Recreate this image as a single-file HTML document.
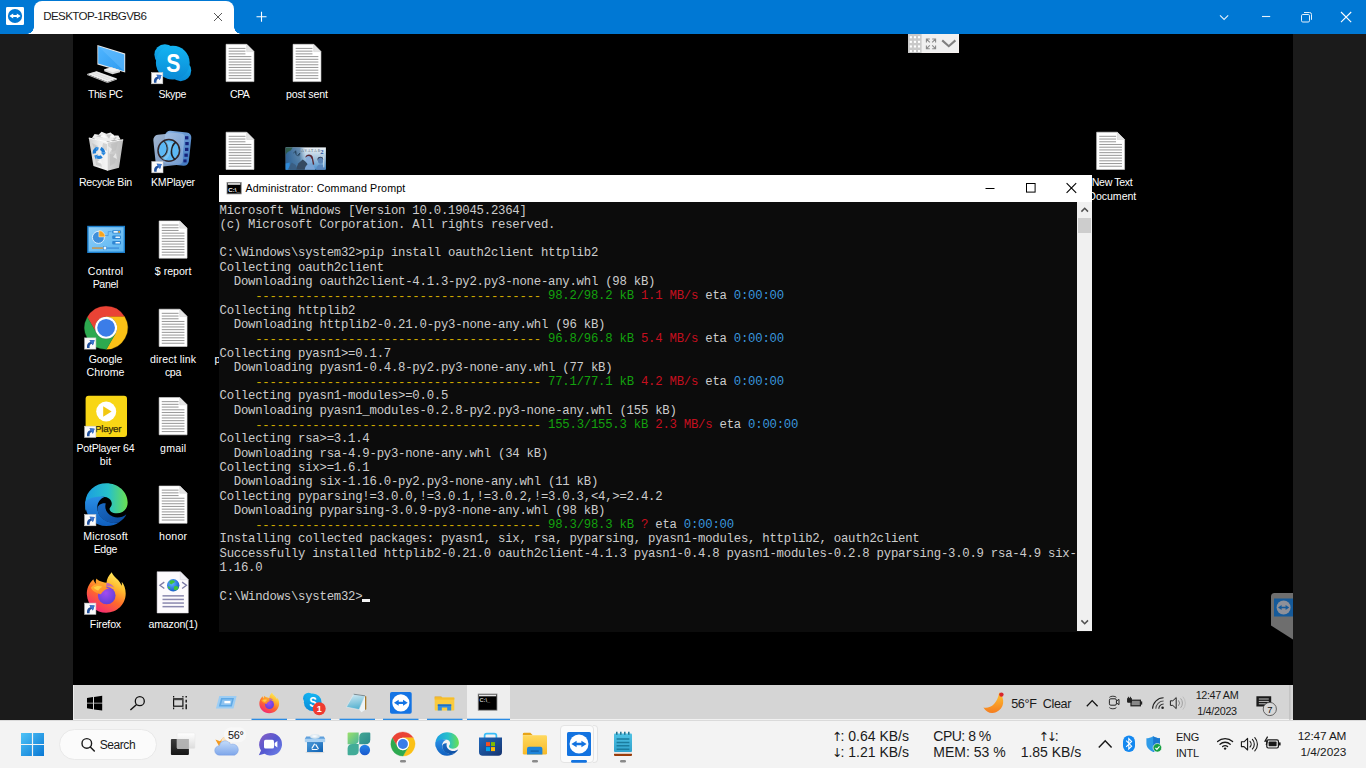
<!DOCTYPE html>
<html lang="en">
<head>
<meta charset="utf-8">
<title>DESKTOP-1RBGVB6 - TeamViewer</title>
<style>
*{box-sizing:border-box;margin:0;padding:0}
html,body{width:1366px;height:768px;overflow:hidden;background:#000;font-family:"Liberation Sans",sans-serif}
.abs{position:absolute}
#root{position:relative;width:1366px;height:768px;overflow:hidden;background:#000}
/* ---------- TeamViewer top bar ---------- */
#tvbar{left:0;top:0;width:1366px;height:34px;background:#0078d4}
#tvtab{left:34px;top:1px;width:200px;height:33px;background:#fff;border-radius:8px 8px 0 0}
#tvtab:before,#tvtab:after{content:"";position:absolute;bottom:0;width:7px;height:7px;background:radial-gradient(circle at 0 0,#0078d4 6.5px,#fff 7px)}
#tvtab:before{left:-7px}
#tvtab:after{right:-7px;background:radial-gradient(circle at 100% 0,#0078d4 6.5px,#fff 7px)}
#tvtitle{left:43.3px;top:8.1px;font-size:11.6px;line-height:15px;color:#1b1b1b;letter-spacing:-0.64px;white-space:nowrap}
/* ---------- side strips ---------- */
#lstrip{left:0;top:34px;width:73px;height:686px;background:#1b1b1b}
#rstrip{left:1293px;top:34px;width:73px;height:686px;background:#1b1b1b}
/* ---------- remote desktop ---------- */
#remote{left:73px;top:34px;width:1220px;height:686px;background:#000;overflow:hidden}
.dlabel{position:absolute;width:80px;text-align:center;color:#fff;font-size:10.6px;line-height:13.4px;letter-spacing:-0.35px;text-shadow:0 1px 1px #000;white-space:nowrap}
/* ---------- cmd window ---------- */
#cmd{left:219px;top:175px;width:873px;height:457px;background:#0c0c0c}
#cmdtitle{left:0;top:0;width:873px;height:27px;background:#fff}
#cmdname{left:26.5px;top:6.3px;font-size:10.7px;line-height:14px;color:#000;letter-spacing:0.15px;white-space:nowrap}
#cmdscroll{left:858px;top:27px;width:15px;height:429px;background:#f0f0f0}
#cmdthumb{left:1px;top:16px;width:13px;height:15px;background:#cdcdcd}
#term{left:0.5px;top:28.6px;width:858px;color:#cccccc;font-family:"Liberation Mono",monospace;font-size:12.3px;line-height:14.29px;letter-spacing:-0.237px;white-space:pre}
#term .y{color:#cfa800;position:relative;top:.6px}
#term .g{color:#13a10e}
#term .r{color:#c50f1f}
#term .b{color:#3a96dd}
/* ---------- remote taskbar ---------- */
#rtask{left:73px;top:685px;width:1220px;height:35px;background:#d5d5d5;border-left:1px solid #ececec;border-bottom:1px solid #f2f2f2}
/* ---------- local taskbar ---------- */
#ltask{left:0;top:720px;width:1366px;height:48px;background:#f3f3f3;border-top:1px solid #dadada}
.tt{position:absolute;white-space:nowrap;color:#1a1a1a}
</style>
</head>
<body>
<div id="root">

<!-- TOPBAR -->
<div id="tvbar" class="abs"></div>
<div id="tvtab" class="abs"></div>
<div id="tvtitle" class="abs">DESKTOP-1RBGVB6</div>
<svg class="abs" style="left:0;top:0" width="1366" height="34" viewBox="0 0 1366 34"><g transform="translate(6.00 7.00) scale(1.0000)"><rect x="0" y="0" width="18" height="18" rx="1.2" fill="#ffffff"/><circle cx="9" cy="9" r="7.100" fill="#0078d4"/><path d="M3.300 9L7.200 6.500V8.100H10.800V6.500L14.700 9 10.800 11.500V9.900H7.200V11.500z" fill="#ffffff"/></g><path d="M214 13l8 8M222 13l-8 8" stroke="#5a5a5a" stroke-width="1" fill="none"/><path d="M256.500 16.700h10M261.500 11.700v10" stroke="#ffffff" stroke-width="1.100" fill="none"/><path d="M1220 15.400l4.100 4.100 4.100-4.100" stroke="#e6f1fb" stroke-width="1.100" fill="none"/><path d="M1262 16.500h8.200" stroke="#e6f1fb" stroke-width="1.100" fill="none"/><rect x="1301.500" y="14.500" width="8" height="7.500" rx="1.300" stroke="#e6f1fb" stroke-width="1" fill="none"/><path d="M1304 12.500h5.500a2 2 0 0 1 2 2v5.300" stroke="#e6f1fb" stroke-width="1" fill="none"/><path d="M1341 12l10.200 10.200M1351.200 12l-10.200 10.200" stroke="#ffffff" stroke-width="1.100" fill="none"/></svg><div class="abs" style="left:908px;top:34px;width:51px;height:19px;background:#f0f0f0;border:1px solid #f7f2f0;border-top:0"></div><svg class="abs" style="left:908px;top:34px" width="51" height="19" viewBox="0 0 51 19"><rect x="0" y="0" width="13.600" height="19" fill="#c9c9c9"/><rect x="1.80" y="2.20" width="2.100" height="2.100" fill="#ffffff"/><rect x="5.90" y="2.20" width="2.100" height="2.100" fill="#ffffff"/><rect x="10.00" y="2.20" width="2.100" height="2.100" fill="#ffffff"/><rect x="1.80" y="6.80" width="2.100" height="2.100" fill="#ffffff"/><rect x="5.90" y="6.80" width="2.100" height="2.100" fill="#ffffff"/><rect x="10.00" y="6.80" width="2.100" height="2.100" fill="#ffffff"/><rect x="1.80" y="11.40" width="2.100" height="2.100" fill="#ffffff"/><rect x="5.90" y="11.40" width="2.100" height="2.100" fill="#ffffff"/><rect x="10.00" y="11.40" width="2.100" height="2.100" fill="#ffffff"/><rect x="1.80" y="16.00" width="2.100" height="2.100" fill="#ffffff"/><rect x="5.90" y="16.00" width="2.100" height="2.100" fill="#ffffff"/><rect x="10.00" y="16.00" width="2.100" height="2.100" fill="#ffffff"/><g stroke="#8a8a8a" stroke-width="1.100" fill="none"><path d="M18.400 8.400v-3.400h3.400M18.800 5.400l3 3M27.600 8.400v-3.400h-3.400M27.200 5.400l-3 3M18.400 11.400v3.400h3.400M18.800 14.400l3-3M27.600 11.400v3.400h-3.400M27.200 14.400l-3-3"/></g><path d="M34.200 6.400l6.600 5.800 6.600-5.800" stroke="#808080" stroke-width="2.100" fill="none"/></svg><svg class="abs" style="left:1270px;top:592px" width="24" height="50" viewBox="0 0 24 50"><path d="M23 1H4.500Q1 1 1 4.500V33.500L23 47.500z" fill="#6e6e6e"/><rect x="4" y="6.500" width="19" height="18" fill="#155a9a"/><circle cx="13.600" cy="15.500" r="7" fill="#8d9099"/><path d="M8 15.500L11.600 13v1.700h4V13L19.200 15.500 15.600 18v-1.700h-4V18z" fill="#155a9a"/></svg>

<div id="lstrip" class="abs"></div>
<div id="rstrip" class="abs"></div>

<!-- DESKTOP -->
<div id="desk" class="abs" style="left:0;top:0;width:1366px;height:768px">
<svg class="abs" style="left:0;top:0" width="1366" height="768" viewBox="0 0 1366 768"><g transform="translate(84.00 44.00)"><defs><linearGradient id="pcg" x1="0" y1="0" x2="1" y2="1"><stop offset="0" stop-color="#4fb4ff"/><stop offset="1" stop-color="#2f9cf0"/></linearGradient></defs><path d="M13.4 0.9L41.2 9.6V28.6L13.4 20.4z" fill="#e8e8e8"/><path d="M14.2 2.2L40.2 10.4V27.2L14.2 19.6z" fill="url(#pcg)"/><path d="M14.2 2.2L40.2 10.4V27.2z" fill="#6cc2ff" opacity=".45"/><path d="M20.2 25.2L27.6 23.4 36 26.2 36 28.2 28.6 30.2 20.2 27.2z" fill="#d9d9d9"/><path d="M20.2 25.2L27.6 23.4 36 26.2 28.6 28.2z" fill="#f2f2f2"/><path d="M3 30L12.6 27.2 33 34.6 23.4 38z" fill="#f0f0f0"/><path d="M3 30L23.4 38V39L3 31z" fill="#bdbdbd"/><path d="M23.4 38L33 34.6V35.6L23.4 39z" fill="#cfcfcf"/><path d="M6 29.8L13 27.8M8.6 30.8L15.6 28.8M11.2 31.8L18.2 29.8M13.8 32.8L20.8 30.8M16.4 33.8L23.4 31.8M19 34.8L26 32.8M21.6 35.8L28.6 33.8" stroke="#d2d2d2" stroke-width=".6"/></g><g><defs><linearGradient id="sk1" x1="0" y1="0" x2="0" y2="1"><stop offset="0" stop-color="#14b4f2"/><stop offset="1" stop-color="#0a8ad6"/></linearGradient></defs><circle cx="164.90" cy="54.80" r="10.53" fill="url(#sk1)"/><circle cx="180.70" cy="70.60" r="10.53" fill="url(#sk1)"/><circle cx="172.80" cy="62.70" r="16.92" fill="url(#sk1)"/><text transform="translate(173.36 71.84) scale(0.8 1)" x="0" y="0" text-anchor="middle" font-family="Liberation Sans,sans-serif" font-weight="bold" font-size="26.5" fill="#ffffff">S</text></g><g transform="translate(151.60 72.60) scale(0.933)"><rect x="0" y="0" width="12" height="12" fill="#fafafa" stroke="#cfcfcf" stroke-width="0.6"/><path d="M2.6 10.8C2 7 3.8 4.700 6.400 4.400L5.200 2.200 10.600 2.600 8.800 8 7.600 6.200C5.800 6.600 5 8.200 5.200 10.800z" fill="#1f4f9c"/><path d="M6.400 4.400L5.200 2.200 10.600 2.600 8.800 8z" fill="#3a74cc"/></g><g><path d="M226.05 44.30h20.60l7.30 7.30v30.00h-27.90z" fill="#ffffff" stroke="#d8d8d8" stroke-width="0.6"/><rect x="228.65" y="47.90" width="16.80" height="1.05" fill="#9c9c9c"/><rect x="228.65" y="50.62" width="16.80" height="1.05" fill="#9c9c9c"/><rect x="228.65" y="53.34" width="16.80" height="1.05" fill="#9c9c9c"/><rect x="228.65" y="56.06" width="22.70" height="1.05" fill="#9c9c9c"/><rect x="228.65" y="58.78" width="22.70" height="1.05" fill="#9c9c9c"/><rect x="228.65" y="61.50" width="22.70" height="1.05" fill="#9c9c9c"/><rect x="228.65" y="64.22" width="22.70" height="1.05" fill="#9c9c9c"/><rect x="228.65" y="66.94" width="22.70" height="1.05" fill="#9c9c9c"/><rect x="228.65" y="69.66" width="22.70" height="1.05" fill="#9c9c9c"/><rect x="228.65" y="72.38" width="22.70" height="1.05" fill="#9c9c9c"/><rect x="228.65" y="75.10" width="22.70" height="1.05" fill="#9c9c9c"/><rect x="228.65" y="77.82" width="22.70" height="1.05" fill="#9c9c9c"/><path d="M246.65 44.30v7.30h7.30z" fill="#e4e4e4" stroke="#cfcfcf" stroke-width="0.5"/></g><g><path d="M293.05 44.30h20.60l7.30 7.30v30.00h-27.90z" fill="#ffffff" stroke="#d8d8d8" stroke-width="0.6"/><rect x="295.65" y="47.90" width="16.80" height="1.05" fill="#9c9c9c"/><rect x="295.65" y="50.62" width="16.80" height="1.05" fill="#9c9c9c"/><rect x="295.65" y="53.34" width="16.80" height="1.05" fill="#9c9c9c"/><rect x="295.65" y="56.06" width="22.70" height="1.05" fill="#9c9c9c"/><rect x="295.65" y="58.78" width="22.70" height="1.05" fill="#9c9c9c"/><rect x="295.65" y="61.50" width="22.70" height="1.05" fill="#9c9c9c"/><rect x="295.65" y="64.22" width="22.70" height="1.05" fill="#9c9c9c"/><rect x="295.65" y="66.94" width="22.70" height="1.05" fill="#9c9c9c"/><rect x="295.65" y="69.66" width="22.70" height="1.05" fill="#9c9c9c"/><rect x="295.65" y="72.38" width="22.70" height="1.05" fill="#9c9c9c"/><rect x="295.65" y="75.10" width="22.70" height="1.05" fill="#9c9c9c"/><rect x="295.65" y="77.82" width="22.70" height="1.05" fill="#9c9c9c"/><path d="M313.65 44.30v7.30h7.30z" fill="#e4e4e4" stroke="#cfcfcf" stroke-width="0.5"/></g><g transform="translate(84.00 131.00)"><defs><linearGradient id="rbg" x1="0" y1="0" x2="1" y2="0"><stop offset="0" stop-color="#cfcfcf"/><stop offset=".3" stop-color="#ececec"/><stop offset=".52" stop-color="#f4f4f4"/><stop offset=".56" stop-color="#d4d4d4"/><stop offset="1" stop-color="#bdbdbd"/></linearGradient></defs><path d="M8 7L10.600 3 14.600 3.800 17.600 0.800 22.400 2.800 26.600 1.600 30 4.600 34.400 4.400 36.600 8.400 20 11z" fill="#ededed"/><path d="M12 5.600l4-2.200 3 3.400zM22 3.400l5 0-2 4.400zM29 5.400l4 1.200-3 3z" fill="#c9c9c9"/><path d="M16 6l4-3 3 4zM26 6l3-3 2 4z" fill="#fbfbfb"/><path d="M4.800 7L23.600 11 39.200 8.800 35 36.800 23.600 39.800 9.400 35z" fill="url(#rbg)"/><g opacity=".55"><path d="M8 12l6 3-3 6zM27 13l7-2-2 8-4 2zM26 23l7 1-2 8-5 3zM11 27l5 2 2 7-6-2zM19 12l4 1v7l-5-3z" fill="#bcbcbc"/><path d="M24 15l4 3-3 5zM29 26l3-4 1 6zM13 31l4-3 1 5z" fill="#ffffff"/></g><path d="M4.800 7L23.600 11 39.200 8.800" fill="none" stroke="#fdfdfd" stroke-width="1.100"/><path d="M23.600 11V39.800" stroke="#f6f6f6" stroke-width=".7" opacity=".8"/><path d="M16.62 17.53A4.6 4.6 0 0 1 19.50 21.64" fill="none" stroke="#1c7cd6" stroke-width="3.200"/><path d="M22.10 21.55L16.90 21.73L19.59 24.44z" fill="#2b8ae0"/><path d="M17.73 25.42A4.6 4.6 0 0 1 12.74 25.86" fill="none" stroke="#1c7cd6" stroke-width="3.200"/><path d="M11.52 28.16L13.96 23.57L10.27 24.55z" fill="#2b8ae0"/><path d="M10.34 22.44A4.6 4.6 0 0 1 12.46 17.90" fill="none" stroke="#1c7cd6" stroke-width="3.200"/><path d="M11.08 15.69L13.84 20.10L14.84 16.42z" fill="#2b8ae0"/></g><g transform="translate(152.40 130.80)"><defs><linearGradient id="kmg" x1="0" y1="0" x2="1" y2="1"><stop offset="0" stop-color="#b4cbe8"/><stop offset="1" stop-color="#7098cc"/></linearGradient><linearGradient id="kmb" x1="0" y1="0" x2="1" y2="1"><stop offset="0" stop-color="#86b0e0"/><stop offset="1" stop-color="#3f78c0"/></linearGradient></defs><rect x="11.400" y="0.800" width="26.400" height="33.400" rx="5" fill="url(#kmb)" transform="rotate(6 25 17)"/><rect x="13" y="2.400" width="18" height="30" rx="3.500" fill="#a9c6ea" opacity=".55" transform="rotate(6 25 17)"/><g fill="#14227a"><rect x="32.600" y="5.400" width="3.400" height="3.200"/><rect x="32.900" y="11.200" width="3.400" height="3.200"/><rect x="32.600" y="17" width="3.400" height="3.200"/><rect x="32" y="22.800" width="3.400" height="3.200"/><rect x="31" y="28.600" width="3.200" height="3"/></g><rect x="2" y="3" width="27.600" height="32" rx="5" fill="url(#kmg)" opacity=".9" transform="rotate(-6 16 19)"/><circle cx="16.400" cy="19.600" r="10.800" fill="#5cb8f4" stroke="#33262a" stroke-width="1.500"/><path d="M11.600 10.200C16.600 15 16.600 24.200 8.400 27" fill="none" stroke="#221c1e" stroke-width="1.700"/><path d="M23.400 11.400C17.400 16.200 17.800 25.200 22.800 28.800" fill="none" stroke="#221c1e" stroke-width="1.700"/><path d="M11.600 10.200C16.600 15 16.600 24.200 8.400 27L12 29.600C18 27 18.600 18 20.400 12.200z" fill="#9bd8fc" opacity=".45"/></g><g transform="translate(151.80 161.60) scale(0.933)"><rect x="0" y="0" width="12" height="12" fill="#fafafa" stroke="#cfcfcf" stroke-width="0.6"/><path d="M2.6 10.8C2 7 3.8 4.700 6.400 4.400L5.200 2.200 10.600 2.600 8.800 8 7.600 6.200C5.800 6.600 5 8.200 5.200 10.800z" fill="#1f4f9c"/><path d="M6.400 4.400L5.200 2.200 10.600 2.600 8.800 8z" fill="#3a74cc"/></g><g><path d="M226.05 132.20h20.60l7.30 7.30v30.00h-27.90z" fill="#ffffff" stroke="#d8d8d8" stroke-width="0.6"/><rect x="228.65" y="135.80" width="16.80" height="1.05" fill="#9c9c9c"/><rect x="228.65" y="138.52" width="16.80" height="1.05" fill="#9c9c9c"/><rect x="228.65" y="141.24" width="16.80" height="1.05" fill="#9c9c9c"/><rect x="228.65" y="143.96" width="22.70" height="1.05" fill="#9c9c9c"/><rect x="228.65" y="146.68" width="22.70" height="1.05" fill="#9c9c9c"/><rect x="228.65" y="149.40" width="22.70" height="1.05" fill="#9c9c9c"/><rect x="228.65" y="152.12" width="22.70" height="1.05" fill="#9c9c9c"/><rect x="228.65" y="154.84" width="22.70" height="1.05" fill="#9c9c9c"/><rect x="228.65" y="157.56" width="22.70" height="1.05" fill="#9c9c9c"/><rect x="228.65" y="160.28" width="22.70" height="1.05" fill="#9c9c9c"/><rect x="228.65" y="163.00" width="22.70" height="1.05" fill="#9c9c9c"/><rect x="228.65" y="165.72" width="22.70" height="1.05" fill="#9c9c9c"/><path d="M246.65 132.20v7.30h7.30z" fill="#e4e4e4" stroke="#cfcfcf" stroke-width="0.5"/></g><g transform="translate(285.70 147.40)"><defs><linearGradient id="avg" x1="0" y1="0" x2="0" y2="1"><stop offset="0" stop-color="#eef4f8"/><stop offset=".45" stop-color="#a9c6de"/><stop offset="1" stop-color="#4a8fcc"/></linearGradient><linearGradient id="avl" x1="0" y1="0" x2="1" y2="0"><stop offset="0" stop-color="#2d6296"/><stop offset=".7" stop-color="#3f6d98" stop-opacity=".75"/><stop offset="1" stop-color="#6f9cc4" stop-opacity="0"/></linearGradient></defs><rect x="0" y="0" width="40.2" height="22.3" fill="url(#avg)"/><rect x="0" y="0" width="20" height="22.3" fill="url(#avl)"/><path d="M0 0h7l-2 3-3 1.500L0 7z" fill="#2f5a3a" opacity=".8"/><path d="M0 16l4-1 0 7.300H0z" fill="#2f8ad8"/><path d="M10 22.300L12.500 16 17 12 21 15 24 22.300z" fill="#364a62"/><path d="M2 22.300L6 15 10 17.500 12 22.300z" fill="#3a5a7c" opacity=".8"/><path d="M7.700 5.600l2.600-2.200-.6 2.400 1.800-.2M9.600 6.400l2 1.800 2.600-2.400-1.400 3" stroke="#1f3a52" stroke-width=".8" fill="none"/><path d="M19.600 10.200c.4-3.600 5.800-4.200 7.400-.8l1.600 7.600-1.400.4-1-5.600c-1.600-2.400-4.800-2.600-6.600-1.600z" fill="#5a2632"/><ellipse cx="22.800" cy="12.400" rx="2.900" ry="3.800" fill="#86addb"/><path d="M19 22.300c.6-4.600 3-5.800 5-5.800s4.600 1.400 5.400 5.800z" fill="#7aa4d6"/><path d="M31.800 11.600c.6-3 5.200-3 5.800.2l-.6 1.600h-4.800z" fill="#26283e"/><ellipse cx="34.800" cy="13.200" rx="2.600" ry="3.200" fill="#5c84b6"/><path d="M30.400 22.300c.6-4 2.600-5.200 4.400-5.200s4 1.200 4.600 5.200z" fill="#5a86bc"/><path d="M38 9v11" stroke="#e8f0f6" stroke-width="1" opacity=".7"/><text x="25.500" y="4.700" text-anchor="middle" font-family="Liberation Serif,serif" font-size="3.600" fill="#4a5a6a" letter-spacing="1.100">AVATAR</text><text x="36.200" y="6.400" text-anchor="middle" font-family="Liberation Serif,serif" font-weight="bold" font-size="6.600" fill="#1f4f9c">2</text></g><g transform="translate(84.00 219.00)"><defs><linearGradient id="cpg" x1="0" y1="0" x2="1" y2="1"><stop offset="0" stop-color="#8fd0fa"/><stop offset="1" stop-color="#5ab4f0"/></linearGradient></defs><rect x="3.2" y="6.8" width="37.8" height="27.2" fill="#1d7fcc"/><rect x="4.6" y="8.2" width="35" height="24.4" fill="url(#cpg)"/><circle cx="14.4" cy="18.4" r="6" fill="#3f8fda" stroke="#e8f4ff" stroke-width=".9"/><path d="M14.9 17.9V11.6A6.3 6.3 0 0 1 21.2 17.9z" fill="#f7a51e" stroke="#fff" stroke-width=".5"/><path d="M21 16.6h3.2v-4h3.4" fill="none" stroke="#3f8fda" stroke-width=".7"/><g fill="#2f86d2"><rect x="28.2" y="11.2" width="8.8" height="3.4" rx="1"/><rect x="28.2" y="16.6" width="8.8" height="3.4" rx="1"/><rect x="28.2" y="22" width="8.8" height="3.4" rx="1"/></g><g fill="#e9f5ff"><rect x="29.4" y="12.1" width="4.6" height="1.6" rx=".6"/><rect x="31.4" y="17.5" width="4.6" height="1.6" rx=".6"/><rect x="31.4" y="22.9" width="4.6" height="1.6" rx=".6"/></g><rect x="34.4" y="12.1" width="1.6" height="1.6" fill="#f7a51e"/><rect x="8" y="28.4" width="27" height="1.4" fill="#3f8fda"/><rect x="8" y="28.4" width="11" height="1.4" fill="#d9a04a"/><rect x="19.4" y="27.4" width="3" height="3.4" fill="#eaf6ff" stroke="#2f86d2" stroke-width=".5"/></g><g><path d="M159.15 220.90h20.60l7.30 7.30v30.00h-27.90z" fill="#ffffff" stroke="#d8d8d8" stroke-width="0.6"/><rect x="161.75" y="224.50" width="16.80" height="1.05" fill="#9c9c9c"/><rect x="161.75" y="227.22" width="16.80" height="1.05" fill="#9c9c9c"/><rect x="161.75" y="229.94" width="16.80" height="1.05" fill="#9c9c9c"/><rect x="161.75" y="232.66" width="22.70" height="1.05" fill="#9c9c9c"/><rect x="161.75" y="235.38" width="22.70" height="1.05" fill="#9c9c9c"/><rect x="161.75" y="238.10" width="22.70" height="1.05" fill="#9c9c9c"/><rect x="161.75" y="240.82" width="22.70" height="1.05" fill="#9c9c9c"/><rect x="161.75" y="243.54" width="22.70" height="1.05" fill="#9c9c9c"/><rect x="161.75" y="246.26" width="22.70" height="1.05" fill="#9c9c9c"/><rect x="161.75" y="248.98" width="22.70" height="1.05" fill="#9c9c9c"/><rect x="161.75" y="251.70" width="22.70" height="1.05" fill="#9c9c9c"/><rect x="161.75" y="254.42" width="22.70" height="1.05" fill="#9c9c9c"/><path d="M179.75 220.90v7.30h7.30z" fill="#e4e4e4" stroke="#cfcfcf" stroke-width="0.5"/></g><g><path d="M96.57 333.30L87.33 317.31A21.50 21.50 0 0 1 124.57 316.79L106.10 316.79A11.01 11.01 0 0 0 96.57 333.30z" fill="#ea4335" stroke="#ea4335" stroke-width=".3"/><path d="M106.10 316.79L124.57 316.79A21.50 21.50 0 0 1 106.40 349.30L115.63 333.30A11.01 11.01 0 0 0 106.10 316.79z" fill="#fbc116" stroke="#fbc116" stroke-width=".3"/><path d="M115.63 333.30L106.40 349.30A21.50 21.50 0 0 1 87.33 317.31L96.57 333.30A11.01 11.01 0 0 0 115.63 333.30z" fill="#2da94f" stroke="#2da94f" stroke-width=".3"/><circle cx="106.10" cy="327.80" r="11.01" fill="#ffffff"/><circle cx="106.10" cy="327.80" r="8.90" fill="#3b7de8"/></g><g transform="translate(84.70 337.90) scale(0.933)"><rect x="0" y="0" width="12" height="12" fill="#fafafa" stroke="#cfcfcf" stroke-width="0.6"/><path d="M2.6 10.8C2 7 3.8 4.700 6.400 4.400L5.200 2.200 10.600 2.600 8.800 8 7.600 6.200C5.800 6.600 5 8.200 5.200 10.800z" fill="#1f4f9c"/><path d="M6.400 4.400L5.200 2.200 10.600 2.600 8.800 8z" fill="#3a74cc"/></g><g><path d="M159.15 309.20h20.60l7.30 7.30v30.00h-27.90z" fill="#ffffff" stroke="#d8d8d8" stroke-width="0.6"/><rect x="161.75" y="312.80" width="16.80" height="1.05" fill="#9c9c9c"/><rect x="161.75" y="315.52" width="16.80" height="1.05" fill="#9c9c9c"/><rect x="161.75" y="318.24" width="16.80" height="1.05" fill="#9c9c9c"/><rect x="161.75" y="320.96" width="22.70" height="1.05" fill="#9c9c9c"/><rect x="161.75" y="323.68" width="22.70" height="1.05" fill="#9c9c9c"/><rect x="161.75" y="326.40" width="22.70" height="1.05" fill="#9c9c9c"/><rect x="161.75" y="329.12" width="22.70" height="1.05" fill="#9c9c9c"/><rect x="161.75" y="331.84" width="22.70" height="1.05" fill="#9c9c9c"/><rect x="161.75" y="334.56" width="22.70" height="1.05" fill="#9c9c9c"/><rect x="161.75" y="337.28" width="22.70" height="1.05" fill="#9c9c9c"/><rect x="161.75" y="340.00" width="22.70" height="1.05" fill="#9c9c9c"/><rect x="161.75" y="342.72" width="22.70" height="1.05" fill="#9c9c9c"/><path d="M179.75 309.20v7.30h7.30z" fill="#e4e4e4" stroke="#cfcfcf" stroke-width="0.5"/></g><g transform="translate(84.00 394.10)"><rect x="1.6" y="1.7" width="41.4" height="41.3" rx="3" fill="#f8d615"/><circle cx="22.2" cy="17.4" r="10" fill="#ffffff"/><path d="M19.2 12.2L27.6 17.4 19.2 22.6z" fill="#f2c811"/><text x="24.2" y="37.9" text-anchor="middle" font-family="Liberation Sans,sans-serif" font-size="9.700" fill="#332b08" stroke="#332b08" stroke-width=".25" letter-spacing="-0.2">Player</text></g><g transform="translate(84.70 426.20) scale(0.933)"><rect x="0" y="0" width="12" height="12" fill="#fafafa" stroke="#cfcfcf" stroke-width="0.6"/><path d="M2.6 10.8C2 7 3.8 4.700 6.400 4.400L5.200 2.200 10.600 2.600 8.800 8 7.600 6.200C5.800 6.600 5 8.200 5.200 10.800z" fill="#1f4f9c"/><path d="M6.400 4.400L5.200 2.200 10.600 2.600 8.800 8z" fill="#3a74cc"/></g><g><path d="M159.15 397.50h20.60l7.30 7.30v30.00h-27.90z" fill="#ffffff" stroke="#d8d8d8" stroke-width="0.6"/><rect x="161.75" y="401.10" width="16.80" height="1.05" fill="#9c9c9c"/><rect x="161.75" y="403.82" width="16.80" height="1.05" fill="#9c9c9c"/><rect x="161.75" y="406.54" width="16.80" height="1.05" fill="#9c9c9c"/><rect x="161.75" y="409.26" width="22.70" height="1.05" fill="#9c9c9c"/><rect x="161.75" y="411.98" width="22.70" height="1.05" fill="#9c9c9c"/><rect x="161.75" y="414.70" width="22.70" height="1.05" fill="#9c9c9c"/><rect x="161.75" y="417.42" width="22.70" height="1.05" fill="#9c9c9c"/><rect x="161.75" y="420.14" width="22.70" height="1.05" fill="#9c9c9c"/><rect x="161.75" y="422.86" width="22.70" height="1.05" fill="#9c9c9c"/><rect x="161.75" y="425.58" width="22.70" height="1.05" fill="#9c9c9c"/><rect x="161.75" y="428.30" width="22.70" height="1.05" fill="#9c9c9c"/><rect x="161.75" y="431.02" width="22.70" height="1.05" fill="#9c9c9c"/><path d="M179.75 397.50v7.30h7.30z" fill="#e4e4e4" stroke="#cfcfcf" stroke-width="0.5"/></g><g transform="translate(84.40 482.80) scale(0.9125)"><defs><linearGradient id="e1a" x1="0" y1="0" x2="1" y2="0"><stop offset="0" stop-color="#1b9de2"/><stop offset=".55" stop-color="#27c1c9"/><stop offset="1" stop-color="#6be04f"/></linearGradient><linearGradient id="e1b" x1="0" y1="0" x2="0" y2="1"><stop offset="0" stop-color="#2a8fe6"/><stop offset="1" stop-color="#0f5fbf"/></linearGradient><linearGradient id="e1c" x1="0" y1="0" x2="1" y2="1"><stop offset="0" stop-color="#1a6bc4"/><stop offset="1" stop-color="#0b4a9e"/></linearGradient></defs><path d="M1 21C2 9 12 0.6 24 0.6C37 0.6 47.4 10 47.4 21.6C47.4 29 42 33.4 35.6 33.4C30 33.4 27.4 30.6 27.6 28.4C27.8 26.6 30 26 30 22.6C30 18.6 26 15.2 20.6 15.2C11.4 15.2 4 22 1 31z" fill="url(#e1a)"/><path d="M1 21C0 34 9 47.4 24 47.4C30 47.4 35 45.6 38.4 43C29 45.6 16.6 40.6 14.4 30C13 23 17 17.2 22.6 15.4C10 13.6 2 19 1 21z" fill="url(#e1b)"/><path d="M14.4 30C16 40.6 28 46.4 38.4 43C42 40.6 44.6 37.6 46 34.4C42 38 36 39 31 37C25 34.6 21.6 29 23.4 22.6C18 22 13.6 25 14.4 30z" fill="url(#e1c)"/></g><g transform="translate(84.70 514.60) scale(0.933)"><rect x="0" y="0" width="12" height="12" fill="#fafafa" stroke="#cfcfcf" stroke-width="0.6"/><path d="M2.6 10.8C2 7 3.8 4.700 6.400 4.400L5.200 2.200 10.600 2.600 8.800 8 7.600 6.200C5.800 6.600 5 8.200 5.200 10.800z" fill="#1f4f9c"/><path d="M6.400 4.400L5.200 2.200 10.600 2.600 8.800 8z" fill="#3a74cc"/></g><g><path d="M159.15 486.00h20.60l7.30 7.30v30.00h-27.90z" fill="#ffffff" stroke="#d8d8d8" stroke-width="0.6"/><rect x="161.75" y="489.60" width="16.80" height="1.05" fill="#9c9c9c"/><rect x="161.75" y="492.32" width="16.80" height="1.05" fill="#9c9c9c"/><rect x="161.75" y="495.04" width="16.80" height="1.05" fill="#9c9c9c"/><rect x="161.75" y="497.76" width="22.70" height="1.05" fill="#9c9c9c"/><rect x="161.75" y="500.48" width="22.70" height="1.05" fill="#9c9c9c"/><rect x="161.75" y="503.20" width="22.70" height="1.05" fill="#9c9c9c"/><rect x="161.75" y="505.92" width="22.70" height="1.05" fill="#9c9c9c"/><rect x="161.75" y="508.64" width="22.70" height="1.05" fill="#9c9c9c"/><rect x="161.75" y="511.36" width="22.70" height="1.05" fill="#9c9c9c"/><rect x="161.75" y="514.08" width="22.70" height="1.05" fill="#9c9c9c"/><rect x="161.75" y="516.80" width="22.70" height="1.05" fill="#9c9c9c"/><rect x="161.75" y="519.52" width="22.70" height="1.05" fill="#9c9c9c"/><path d="M179.75 486.00v7.30h7.30z" fill="#e4e4e4" stroke="#cfcfcf" stroke-width="0.5"/></g><g transform="translate(86.20 573.00) scale(0.8333)"><defs><linearGradient id="f1a" x1=".8" y1="0" x2=".25" y2="1"><stop offset="0" stop-color="#fff36b"/><stop offset=".3" stop-color="#ffbd2f"/><stop offset=".6" stop-color="#ff6a2b"/><stop offset="1" stop-color="#f3237a"/></linearGradient><radialGradient id="f1b" cx=".45" cy=".35" r=".7"><stop offset="0" stop-color="#a24cf0"/><stop offset="1" stop-color="#5a3fd6"/></radialGradient><linearGradient id="f1c" x1="0" y1="0" x2="1" y2="1"><stop offset="0" stop-color="#ffb52e"/><stop offset="1" stop-color="#ff7a2a"/></linearGradient></defs><path d="M30.6 -1C27 3 24.6 7 24.4 11.6C18 11 13.6 8.6 12.4 6.6C11 9 11.4 11.6 12 13C10.4 12 9 9.6 8.6 7.6C3 13 0.4 19.6 0.8 26C1.6 38.6 11.6 47.6 24 47.6C37 47.6 47.4 37.6 47.4 24.6C47.4 18.6 45.4 13.6 42.6 10.4C43 12.6 42.8 14 42.4 15.2C40.6 9.6 35.4 6 33.4 3.6C32 2 31 0.4 30.6 -1z" fill="url(#f1a)"/><circle cx="24.6" cy="27" r="10.6" fill="url(#f1b)"/><path d="M5.600 17.600C9 13 15 12.600 19.600 14.600C22.600 15.800 24.600 18 27.600 18.400C23.600 19.400 20 21.600 17.600 25.600C14 24.600 8 22.600 5.600 17.600z" fill="url(#f1c)"/><path d="M9 17.400C12 15 16.600 15 19.600 16.600C17 17.600 15.600 19.600 14.600 21C12.600 20.600 10.400 19.400 9 17.400z" fill="#ffd84a" opacity=".8"/><path d="M24.4 11.6C28 12 32 14 33.6 17.6C30 15.6 26.6 15.6 24 16.6z" fill="#a24cf0" opacity=".7"/></g><g transform="translate(84.70 603.10) scale(0.933)"><rect x="0" y="0" width="12" height="12" fill="#fafafa" stroke="#cfcfcf" stroke-width="0.6"/><path d="M2.6 10.8C2 7 3.8 4.700 6.400 4.400L5.200 2.200 10.600 2.600 8.800 8 7.600 6.200C5.800 6.600 5 8.200 5.200 10.800z" fill="#1f4f9c"/><path d="M6.400 4.400L5.200 2.200 10.600 2.600 8.800 8z" fill="#3a74cc"/></g><g transform="translate(157.10 571.70)"><path d="M0 0h23.2l8 8v33.3h-31.2z" fill="#fdfbfd" stroke="#d9d6de" stroke-width=".5"/><path d="M23.2 0v8h8z" fill="#ececf2" stroke="#cfcfd6" stroke-width=".5"/><defs><radialGradient id="glb" cx=".4" cy=".35" r=".7"><stop offset="0" stop-color="#5fb6ff"/><stop offset="1" stop-color="#1156c8"/></radialGradient></defs><circle cx="16.1" cy="13.6" r="6.2" fill="url(#glb)"/><path d="M12.4 9.6c2-1.6 4.4-1 5.4.2-.4 1.600-2.400 1.400-3 2.800-1.400.4-2.600-1-2.400-3zM17.600 14.400c1.800-.6 3.600.2 4 1.600-.8 1.800-2.600 2.800-4.200 2.600-1-1.400-.8-3.200.2-4.200zM11 14.600c1.200.2 2.200 1.200 2.400 2.600-.8.400-1.800-.2-2.600-1.400z" fill="#3fc43a"/><path d="M7.200 10.400L2.800 13.600 7.200 16.800M25 10.400L29.400 13.600 25 16.800" fill="none" stroke="#7d7ba6" stroke-width="1.300"/><g fill="#8a88ae"><rect x="5.400" y="23.400" width="21.400" height="1.500"/><rect x="5.400" y="27" width="21.400" height="1.500"/><rect x="5.400" y="30.600" width="21.400" height="1.500"/><rect x="5.400" y="34.200" width="21.400" height="1.500"/></g></g><g><path d="M1096.65 132.20h20.60l7.30 7.30v30.00h-27.90z" fill="#ffffff" stroke="#d8d8d8" stroke-width="0.6"/><rect x="1099.25" y="135.80" width="16.80" height="1.05" fill="#9c9c9c"/><rect x="1099.25" y="138.52" width="16.80" height="1.05" fill="#9c9c9c"/><rect x="1099.25" y="141.24" width="16.80" height="1.05" fill="#9c9c9c"/><rect x="1099.25" y="143.96" width="22.70" height="1.05" fill="#9c9c9c"/><rect x="1099.25" y="146.68" width="22.70" height="1.05" fill="#9c9c9c"/><rect x="1099.25" y="149.40" width="22.70" height="1.05" fill="#9c9c9c"/><rect x="1099.25" y="152.12" width="22.70" height="1.05" fill="#9c9c9c"/><rect x="1099.25" y="154.84" width="22.70" height="1.05" fill="#9c9c9c"/><rect x="1099.25" y="157.56" width="22.70" height="1.05" fill="#9c9c9c"/><rect x="1099.25" y="160.28" width="22.70" height="1.05" fill="#9c9c9c"/><rect x="1099.25" y="163.00" width="22.70" height="1.05" fill="#9c9c9c"/><rect x="1099.25" y="165.72" width="22.70" height="1.05" fill="#9c9c9c"/><path d="M1117.25 132.20v7.30h7.30z" fill="#e4e4e4" stroke="#cfcfcf" stroke-width="0.5"/></g></svg><div class="dlabel" style="left:65.27px;top:88.0px;letter-spacing:-0.46px">This PC</div><div class="dlabel" style="left:132.32px;top:88.0px;letter-spacing:-0.35px">Skype</div><div class="dlabel" style="left:199.71px;top:88.0px;letter-spacing:-0.58px">CPA</div><div class="dlabel" style="left:266.94px;top:88.0px;letter-spacing:-0.13px">post sent</div><div class="dlabel" style="left:65.36px;top:176.4px;letter-spacing:-0.27px">Recycle Bin</div><div class="dlabel" style="left:132.97px;top:176.4px;letter-spacing:-0.26px">KMPlayer</div><div class="dlabel" style="left:65.59px;top:264.8px;letter-spacing:0.18px">Control</div><div class="dlabel" style="left:65.33px;top:277.9px;letter-spacing:-0.35px">Panel</div><div class="dlabel" style="left:133.10px;top:264.8px;letter-spacing:0.00px">$ report</div><div class="dlabel" style="left:65.45px;top:353.2px;letter-spacing:-0.10px">Google</div><div class="dlabel" style="left:65.53px;top:366.3px;letter-spacing:0.07px">Chrome</div><div class="dlabel" style="left:133.16px;top:353.2px;letter-spacing:0.12px">direct link</div><div class="dlabel" style="left:132.92px;top:366.3px;letter-spacing:-0.35px">cpa</div><div class="dlabel" style="left:214.500px;top:353.2px;width:auto;text-align:left">p</div><div class="dlabel" style="left:65.39px;top:441.6px;letter-spacing:-0.23px">PotPlayer 64</div><div class="dlabel" style="left:65.58px;top:454.7px;letter-spacing:0.15px">bit</div><div class="dlabel" style="left:133.19px;top:441.6px;letter-spacing:0.19px">gmail</div><div class="dlabel" style="left:65.60px;top:530.0px;letter-spacing:0.20px">Microsoft</div><div class="dlabel" style="left:65.33px;top:543.1px;letter-spacing:-0.35px">Edge</div><div class="dlabel" style="left:133.21px;top:530.0px;letter-spacing:0.22px">honor</div><div class="dlabel" style="left:65.41px;top:618.4px;letter-spacing:-0.18px">Firefox</div><div class="dlabel" style="left:133.01px;top:618.4px;letter-spacing:-0.18px">amazon(1)</div><div class="dlabel" style="left:1072.12px;top:176.4px;letter-spacing:-0.35px">New Text</div><div class="dlabel" style="left:1072.28px;top:189.5px;letter-spacing:-0.04px">Document</div>
</div>

<!-- CMD -->
<div id="cmd" class="abs">
<div id="cmdtitle" class="abs"></div>
<div id="cmdname" class="abs">Administrator: Command Prompt</div>
<svg class="abs" style="left:0;top:0;z-index:3" width="873" height="457" viewBox="0 0 873 457"><g transform="translate(8.00 7.50)"><rect x="0" y="0" width="14.2" height="11.4" fill="#000000" stroke="#8c8c8c" stroke-width=".8"/><rect x=".8" y=".6" width="12.60" height="1.700" fill="#e6e6e6"/><text x="1.300" y="9.20" font-family="Liberation Sans,sans-serif" font-weight="bold" font-size="6.2" fill="#ffffff">C:\_</text></g><path d="M766.500 13.500h9" stroke="#000" stroke-width="1" fill="none"/><rect x="807.500" y="8.500" width="8.600" height="8.600" stroke="#000" stroke-width="1" fill="none"/><path d="M847.600 8.200l9.600 9.600M857.200 8.200l-9.600 9.600" stroke="#000" stroke-width="1.100" fill="none"/><path d="M862.400 36.600l3.300-3.300 3.300 3.300" stroke="#505050" stroke-width="1.500" fill="none"/><path d="M862.400 445.400l3.300 3.300 3.300-3.300" stroke="#505050" stroke-width="1.500" fill="none"/></svg>
<div id="cmdscroll" class="abs"><div id="cmdthumb" class="abs"></div></div>
<div id="term" class="abs">Microsoft Windows [Version 10.0.19045.2364]
(c) Microsoft Corporation. All rights reserved.

C:\Windows\system32&gt;pip install oauth2client httplib2
Collecting oauth2client
  Downloading oauth2client-4.1.3-py2.py3-none-any.whl (98 kB)
     <span class="y">----------------------------------------</span> <span class="g">98.2/98.2 kB</span> <span class="r">1.1 MB/s</span> eta <span class="b">0:00:00</span>
Collecting httplib2
  Downloading httplib2-0.21.0-py3-none-any.whl (96 kB)
     <span class="y">----------------------------------------</span> <span class="g">96.8/96.8 kB</span> <span class="r">5.4 MB/s</span> eta <span class="b">0:00:00</span>
Collecting pyasn1&gt;=0.1.7
  Downloading pyasn1-0.4.8-py2.py3-none-any.whl (77 kB)
     <span class="y">----------------------------------------</span> <span class="g">77.1/77.1 kB</span> <span class="r">4.2 MB/s</span> eta <span class="b">0:00:00</span>
Collecting pyasn1-modules&gt;=0.0.5
  Downloading pyasn1_modules-0.2.8-py2.py3-none-any.whl (155 kB)
     <span class="y">----------------------------------------</span> <span class="g">155.3/155.3 kB</span> <span class="r">2.3 MB/s</span> eta <span class="b">0:00:00</span>
Collecting rsa&gt;=3.1.4
  Downloading rsa-4.9-py3-none-any.whl (34 kB)
Collecting six&gt;=1.6.1
  Downloading six-1.16.0-py2.py3-none-any.whl (11 kB)
Collecting pyparsing!=3.0.0,!=3.0.1,!=3.0.2,!=3.0.3,&lt;4,&gt;=2.4.2
  Downloading pyparsing-3.0.9-py3-none-any.whl (98 kB)
     <span class="y">----------------------------------------</span> <span class="g">98.3/98.3 kB</span> <span class="r">?</span> eta <span class="b">0:00:00</span>
Installing collected packages: pyasn1, six, rsa, pyparsing, pyasn1-modules, httplib2, oauth2client
Successfully installed httplib2-0.21.0 oauth2client-4.1.3 pyasn1-0.4.8 pyasn1-modules-0.2.8 pyparsing-3.0.9 rsa-4.9 six-
1.16.0

C:\Windows\system32&gt;<span style="display:inline-block;width:8px;height:3.7px;background:#f4f4f4;vertical-align:-2.6px"></span></div>
</div>

<!-- RTASK -->
<div id="rtask" class="abs"></div>
<div class="abs" style="left:467px;top:685px;width:43px;height:35px;background:#eeeeee"></div><svg class="abs" style="left:0;top:680px" width="1366" height="45" viewBox="0 680 1366 45"><path d="M87 698.100L93 697.100V702.700H87zM94 696.900L102.200 695.700V702.700H94zM87 703.600H93V709.200L87 708.200zM94 703.600H102.200V710.600L94 709.400z" fill="#000"/><circle cx="139.800" cy="701.200" r="4.500" fill="none" stroke="#111" stroke-width="1.300"/><path d="M136.600 704.400L130.400 709.900" stroke="#111" stroke-width="1.400"/><rect x="173.600" y="698.800" width="9.300" height="7.400" fill="none" stroke="#111" stroke-width="1.200"/><rect x="173.600" y="698.400" width="9.300" height="1.800" fill="#444"/><path d="M173.600 696v1.600M182.900 696v1.600M173.600 707.400v1.800M182.900 707.400v1.800" stroke="#111" stroke-width="1.200"/><path d="M186.200 696v1.600M186.200 699.800v2.600M186.200 704.200v5" stroke="#111" stroke-width="1.400"/><path d="M219.300 696L236.600 696 233.500 708.600 215.900 708.600z" fill="#9ccdf4"/><path d="M221.100 698L234 698 231.800 706.600 218.800 706.600z" fill="#5fa9e6"/><path d="M222.400 699.600L232 699.600 230.600 705 221 705z" fill="#8ec3f0"/><rect x="224.400" y="701" width="6" height="2.300" fill="#ffffff"/><g transform="translate(259.00 693.00) scale(0.4250)"><defs><linearGradient id="f2a" x1=".8" y1="0" x2=".25" y2="1"><stop offset="0" stop-color="#fff36b"/><stop offset=".3" stop-color="#ffbd2f"/><stop offset=".6" stop-color="#ff6a2b"/><stop offset="1" stop-color="#f3237a"/></linearGradient><radialGradient id="f2b" cx=".45" cy=".35" r=".7"><stop offset="0" stop-color="#a24cf0"/><stop offset="1" stop-color="#5a3fd6"/></radialGradient><linearGradient id="f2c" x1="0" y1="0" x2="1" y2="1"><stop offset="0" stop-color="#ffb52e"/><stop offset="1" stop-color="#ff7a2a"/></linearGradient></defs><path d="M30.6 -1C27 3 24.6 7 24.4 11.6C18 11 13.6 8.6 12.4 6.6C11 9 11.4 11.6 12 13C10.4 12 9 9.6 8.6 7.6C3 13 0.4 19.6 0.8 26C1.6 38.6 11.6 47.6 24 47.6C37 47.6 47.4 37.6 47.4 24.6C47.4 18.6 45.4 13.6 42.6 10.4C43 12.6 42.8 14 42.4 15.2C40.6 9.6 35.4 6 33.4 3.6C32 2 31 0.4 30.6 -1z" fill="url(#f2a)"/><circle cx="24.6" cy="27" r="10.6" fill="url(#f2b)"/><path d="M5.600 17.600C9 13 15 12.600 19.600 14.600C22.600 15.800 24.600 18 27.600 18.400C23.600 19.400 20 21.600 17.600 25.600C14 24.600 8 22.600 5.600 17.600z" fill="url(#f2c)"/><path d="M9 17.400C12 15 16.600 15 19.600 16.600C17 17.600 15.600 19.600 14.600 21C12.600 20.600 10.400 19.400 9 17.400z" fill="#ffd84a" opacity=".8"/><path d="M24.4 11.6C28 12 32 14 33.6 17.6C30 15.6 26.6 15.6 24 16.6z" fill="#a24cf0" opacity=".7"/></g><g><defs><linearGradient id="sk2" x1="0" y1="0" x2="0" y2="1"><stop offset="0" stop-color="#14b4f2"/><stop offset="1" stop-color="#0a8ad6"/></linearGradient></defs><circle cx="308.58" cy="698.18" r="5.49" fill="url(#sk2)"/><circle cx="316.82" cy="706.42" r="5.49" fill="url(#sk2)"/><circle cx="312.70" cy="702.30" r="8.82" fill="url(#sk2)"/><text transform="translate(312.99 707.13) scale(0.8 1)" x="0" y="0" text-anchor="middle" font-family="Liberation Sans,sans-serif" font-weight="bold" font-size="14" fill="#ffffff">S</text></g><circle cx="319.200" cy="708.700" r="6.500" fill="#ef3b30"/><text x="319.200" y="712" text-anchor="middle" font-family="Liberation Sans,sans-serif" font-weight="bold" font-size="9" fill="#fff">1</text><defs><linearGradient id="npg" x1=".3" y1="0" x2=".5" y2="1"><stop offset="0" stop-color="#cfe8f2"/><stop offset="1" stop-color="#52b0cf"/></linearGradient></defs><path d="M365 695.800L366.300 696.500V709.300L365 710z" fill="#a8792a"/><path d="M365 696L365 709.900 361.400 712.300 359.100 709.500z" fill="#eef4f7"/><path d="M353.600 694.200L365 695.800 359.100 709.500 346.400 707.100z" fill="url(#npg)" stroke="#e6f1f6" stroke-width=".5"/><path d="M353.600 694.200L365 695.800" stroke="#7d8a90" stroke-width="1"/><g transform="translate(390.00 692.00) scale(1.2056)"><rect x="0" y="0" width="18" height="18" rx="1.5" fill="#1474e4"/><circle cx="9" cy="9" r="7.100" fill="#ffffff"/><path d="M3.300 9L7.200 6.500V8.100H10.800V6.500L14.700 9 10.800 11.500V9.900H7.200V11.500z" fill="#1474e4"/></g><path d="M434.700 696.400h6.600l1.400 1.800h-8z" fill="#e3a21a"/><rect x="434.700" y="697.600" width="19.600" height="13" rx=".8" fill="#fbcb3e"/><rect x="434.700" y="697.600" width="19.600" height="2" fill="#f6bd2c"/><path d="M437.800 710.600v-6.200h13.400v6.200h-4v-3h-5.400v3z" fill="#2f8be0"/><rect x="437.800" y="704.400" width="13.400" height="1.600" fill="#1f6fc4"/><g transform="translate(478.20 694.00)"><rect x="0" y="0" width="18.8" height="16.2" fill="#000000" stroke="#8c8c8c" stroke-width=".8"/><rect x=".8" y=".6" width="17.20" height="1.700" fill="#e6e6e6"/><text x="1.300" y="8.20" font-family="Liberation Sans,sans-serif" font-weight="bold" font-size="5.6" fill="#c8c8c8">C:\_</text></g><rect x="251.5" y="718.700" width="35.5" height="1.400" fill="#2a8be4"/><rect x="295.5" y="718.700" width="35.5" height="1.400" fill="#2a8be4"/><rect x="339.5" y="718.700" width="35.5" height="1.400" fill="#2a8be4"/><rect x="383" y="718.700" width="35.5" height="1.400" fill="#2a8be4"/><rect x="427" y="718.700" width="35.5" height="1.400" fill="#2a8be4"/><rect x="467" y="718.700" width="43" height="1.400" fill="#2a8be4"/><defs><linearGradient id="mng" x1="0" y1="0" x2="0" y2="1"><stop offset="0" stop-color="#ffc533"/><stop offset="1" stop-color="#f57d1f"/></linearGradient></defs><path d="M999.200 692.200C1005.400 698.400 1004.600 708.400 996 712.200C991 714 986 712.200 983.400 707.400C989.600 709 997.400 704.400 999.200 692.200z" fill="url(#mng)"/><circle cx="1001.400" cy="694.600" r="2.200" fill="#d8262c"/><path d="M1086.800 706.200L1092.200 700.600 1097.600 706.200" fill="none" stroke="#111" stroke-width="1.300"/><rect x="1109.400" y="698.800" width="7" height="6.400" rx="1.400" fill="none" stroke="#222" stroke-width="1"/><path d="M1116.400 701l2.600-1.600v5.200l-2.600-1.600" fill="none" stroke="#222" stroke-width="1"/><path d="M1109.400 697.400c1-1.600 6-1.600 7 0M1109.400 707.600c1 1.600 6 1.600 7 0" fill="none" stroke="#222" stroke-width=".9"/><rect x="1130.400" y="699.600" width="10.600" height="6.800" fill="#222"/><rect x="1141" y="701.400" width="1.200" height="3.200" fill="#222"/><rect x="1131.600" y="700.800" width="8.200" height="4.400" fill="#888"/><path d="M1127.600 698.400h3.800v3.800h-3.800zM1128.400 696.800v1.600M1130.400 696.800v1.600" stroke="#222" stroke-width="1" fill="#222"/><g fill="none" stroke="#222" stroke-width="1.100"><path d="M1152.600 708.800A11 11 0 0 1 1163.600 697.800"/><path d="M1155.800 708.800A7.800 7.800 0 0 1 1163.600 701" stroke="#555"/><path d="M1158.800 708.800A4.800 4.800 0 0 1 1163.600 704"/></g><circle cx="1162.600" cy="707.800" r="1.300" fill="#222"/><path d="M1170.400 700.800h2.400l3.400-3.200v11l-3.400-3.200h-2.400z" fill="none" stroke="#222" stroke-width="1"/><g fill="none" stroke="#777" stroke-width=".9"><path d="M1178.400 700.400a4 4 0 0 1 0 5.400"/><path d="M1180.600 698.400a7 7 0 0 1 0 9.400" stroke="#999"/><path d="M1182.800 696.600a9.600 9.600 0 0 1 0 13" stroke="#bbb"/></g><path d="M1256.400 696.200h14.800v10.200h-4.400v3.400l-3.400-3.400h-7z" fill="#1a1a1a"/><path d="M1258.800 699h10M1258.800 701.400h10M1258.800 703.800h7" stroke="#d7d7d7" stroke-width=".9"/><circle cx="1269.800" cy="709" r="6.600" fill="#d7d7d7" stroke="#555" stroke-width=".9"/><text x="1269.800" y="712.600" text-anchor="middle" font-family="Liberation Sans,sans-serif" font-size="9.500" fill="#111">7</text><rect x="1289.400" y="685" width="1" height="35" fill="#b9b9b9"/></svg><div class="tt" id="rt_w" style="left:1011.200px;top:697.400px;font-size:12.600px;line-height:15px;letter-spacing:-0.36px">56°F&nbsp;&nbsp;Clear</div><div class="tt" id="rt_t" style="left:1195.500px;top:688px;width:43px;text-align:center;font-size:10.800px;line-height:14px;letter-spacing:-0.38px">12:47 AM</div><div class="tt" id="rt_d" style="left:1195.500px;top:704px;width:43px;text-align:center;font-size:10.800px;line-height:14px;letter-spacing:-0.3px">1/4/2023</div>

<!-- LTASK -->
<div id="ltask" class="abs"></div>
<div class="abs" style="left:59px;top:729px;width:98px;height:31px;border-radius:15.500px;background:#fbfbfb;border:1px solid #e9e9e9"></div><div class="abs" style="left:593px;top:725px;width:5px;height:38px;border-radius:0 4px 4px 0;background:#f9f9f9;border:1px solid #e4e4e4;border-left:0"></div><div class="abs" style="left:560px;top:725px;width:34px;height:38px;border-radius:4px;background:#fbfbfb;border:1px solid #e4e4e4"></div><svg class="abs" style="left:0;top:720px" width="1366" height="48" viewBox="0 720 1366 48"><defs><linearGradient id="w11" x1="0" y1="0" x2="1" y2="1"><stop offset="0" stop-color="#4fc3f7"/><stop offset="1" stop-color="#0a78d4"/></linearGradient></defs><path d="M21 733h10.900v10.900H21zM33.100 733H44v10.900H33.100zM21 745.100h10.900V756H21zM33.100 745.100H44V756H33.100z" fill="url(#w11)"/><circle cx="86.800" cy="743.400" r="4.800" fill="none" stroke="#1a1a1a" stroke-width="1.400"/><path d="M90.300 747L94.300 751" stroke="#1a1a1a" stroke-width="1.500" stroke-linecap="round"/><defs><linearGradient id="tv1" x1="0" y1="0" x2="0" y2="1"><stop offset="0" stop-color="#3c3c3c"/><stop offset="1" stop-color="#161616"/></linearGradient><linearGradient id="tv2" x1="0" y1="0" x2="0" y2="1"><stop offset="0" stop-color="#ffffff"/><stop offset="1" stop-color="#dcdcdc"/></linearGradient></defs><rect x="170.900" y="739" width="18" height="16" rx="1" fill="url(#tv1)"/><rect x="177" y="733" width="18" height="15.500" rx="1" fill="url(#tv2)" stroke="#e6e6e6" stroke-width=".5"/><rect x="177" y="739" width="11.900" height="9.500" fill="#a9a9a9" opacity=".85"/><defs><linearGradient id="cld" x1="0" y1="0" x2="0" y2="1"><stop offset="0" stop-color="#c4dcfa"/><stop offset="1" stop-color="#7ea6ea"/></linearGradient></defs><path d="M215.400 739.600L220 741.200 223.600 737 224.800 744 219 746z" fill="#f59a1e"/><circle cx="226" cy="741" r="4.600" fill="#fbe3c0"/><path d="M219.600 755.200A4.700 4.700 0 0 1 219.200 745.800A6 6 0 0 1 230.600 744.400A5.400 5.400 0 0 1 234.600 755.200z" fill="url(#cld)" stroke="#6f95de" stroke-width=".4"/><rect x="224" y="727.200" width="22.400" height="15" rx="7.500" fill="#f8f8f8"/><defs><linearGradient id="cht" x1="0" y1="0" x2="1" y2="1"><stop offset="0" stop-color="#8a5fc4"/><stop offset=".5" stop-color="#5558d0"/><stop offset="1" stop-color="#6f86ea"/></linearGradient></defs><path d="M270.400 733A11.300 11.300 0 1 1 264.600 753.800L258.800 755.200 261 750.400A11.300 11.300 0 0 1 270.400 733z" fill="url(#cht)"/><rect x="264" y="739.800" width="10" height="8.800" rx="1.600" fill="#fff"/><path d="M274.600 743L277.400 741V747.400L274.600 745.400z" fill="#fff"/><defs><linearGradient id="bxb" x1="0" y1="0" x2="1" y2="1"><stop offset="0" stop-color="#4c9ddc"/><stop offset="1" stop-color="#0d5fb2"/></linearGradient><radialGradient id="bxd" cx=".45" cy=".4" r=".7"><stop offset="0" stop-color="#ffffff"/><stop offset="1" stop-color="#b9d3e6"/></radialGradient></defs><ellipse cx="315" cy="752.300" rx="9.600" ry="1" fill="#cfcfcf" opacity=".7"/><path d="M306.200 736.400h17.600l1.400 2.600h-20.400z" fill="#5f9fdc"/><ellipse cx="315" cy="736.600" rx="4.900" ry="2.300" fill="url(#bxd)"/><rect x="304.800" y="738.700" width="20.400" height="3.600" rx=".8" fill="#a9d1f3"/><rect x="307" y="742.200" width="16" height="9.800" fill="url(#bxb)"/><rect x="307" y="742.200" width="16" height="1" fill="#2a77c0" opacity=".6"/><path d="M315.84 744.66L318.27 748.63M317.13 749.50L312.26 749.50M312.04 748.14L314.47 744.17" fill="none" stroke="#ffffff" stroke-width="1.150" stroke-linecap="round" opacity=".95"/><defs><linearGradient id="cl1" x1="0" y1="0" x2="1" y2="1"><stop offset="0" stop-color="#9be06a"/><stop offset="1" stop-color="#49b59c"/></linearGradient><linearGradient id="cl2" x1="0" y1="0" x2="1" y2="1"><stop offset="0" stop-color="#44a894"/><stop offset="1" stop-color="#2b8a8c"/></linearGradient><linearGradient id="cl3" x1="0" y1="0" x2="0" y2="1"><stop offset="0" stop-color="#2484ea"/><stop offset="1" stop-color="#1a58cc"/></linearGradient></defs><path d="M347.600 733.600q0-1 1-1h10.100v6.800q0 4.800-4.800 4.800h-6.300z" fill="url(#cl1)"/><path d="M370.300 733.600q0-1-1-1h-5.300q-4.800 0-4.800 4.800v6.800h6.300q4.800 0 4.800-4.800z" fill="url(#cl2)"/><path d="M347.600 754.200q0 1 1 1h5.300q4.800 0 4.800-4.800v-6.400h-6.300q-4.800 0-4.800 4.800z" fill="#42ac98"/><circle cx="364.800" cy="750" r="5.300" fill="url(#cl3)"/><g><path d="M397.53 747.10L392.34 738.10A12.10 12.10 0 0 1 413.29 737.80L402.90 737.80A6.20 6.20 0 0 0 397.53 747.10z" fill="#ea4335" stroke="#ea4335" stroke-width=".3"/><path d="M402.90 737.80L413.29 737.80A12.10 12.10 0 0 1 403.07 756.10L408.27 747.10A6.20 6.20 0 0 0 402.90 737.80z" fill="#fbc116" stroke="#fbc116" stroke-width=".3"/><path d="M408.27 747.10L403.07 756.10A12.10 12.10 0 0 1 392.34 738.10L397.53 747.10A6.20 6.20 0 0 0 408.27 747.10z" fill="#2da94f" stroke="#2da94f" stroke-width=".3"/><circle cx="402.90" cy="744.00" r="6.20" fill="#ffffff"/><circle cx="402.90" cy="744.00" r="5.01" fill="#3b7de8"/></g><g transform="translate(435.00 731.90) scale(0.5042)"><defs><linearGradient id="e2a" x1="0" y1="0" x2="1" y2="0"><stop offset="0" stop-color="#1b9de2"/><stop offset=".55" stop-color="#27c1c9"/><stop offset="1" stop-color="#6be04f"/></linearGradient><linearGradient id="e2b" x1="0" y1="0" x2="0" y2="1"><stop offset="0" stop-color="#2a8fe6"/><stop offset="1" stop-color="#0f5fbf"/></linearGradient><linearGradient id="e2c" x1="0" y1="0" x2="1" y2="1"><stop offset="0" stop-color="#1a6bc4"/><stop offset="1" stop-color="#0b4a9e"/></linearGradient></defs><path d="M1 21C2 9 12 0.6 24 0.6C37 0.6 47.4 10 47.4 21.6C47.4 29 42 33.4 35.6 33.4C30 33.4 27.4 30.6 27.6 28.4C27.8 26.6 30 26 30 22.6C30 18.6 26 15.2 20.6 15.2C11.4 15.2 4 22 1 31z" fill="url(#e2a)"/><path d="M1 21C0 34 9 47.4 24 47.4C30 47.4 35 45.6 38.4 43C29 45.6 16.6 40.6 14.4 30C13 23 17 17.2 22.6 15.4C10 13.6 2 19 1 21z" fill="url(#e2b)"/><path d="M14.4 30C16 40.6 28 46.4 38.4 43C42 40.6 44.6 37.6 46 34.4C42 38 36 39 31 37C25 34.6 21.6 29 23.4 22.6C18 22 13.6 25 14.4 30z" fill="url(#e2c)"/></g><defs><linearGradient id="sto" x1="0" y1="0" x2="1" y2="1"><stop offset="0" stop-color="#1f68bc"/><stop offset="1" stop-color="#16336e"/></linearGradient></defs><path d="M484.600 739v-3.200q0-2.200 2.200-2.200h7.400q2.200 0 2.200 2.200v3.200" fill="none" stroke="#38bdf8" stroke-width="1.700"/><path d="M479 737.400h23v14.600q0 3.800-3.800 3.800h-15.400q-3.800 0-3.800-3.800z" fill="url(#sto)"/><rect x="486" y="742.100" width="4" height="4" fill="#f25022"/><rect x="491" y="742.100" width="4" height="4" fill="#7fba00"/><rect x="486" y="747.100" width="4" height="4" fill="#00a4ef"/><rect x="491" y="747.100" width="4" height="4" fill="#ffb900"/><defs><linearGradient id="fld" x1="0" y1="0" x2="0" y2="1"><stop offset="0" stop-color="#ffd95e"/><stop offset="1" stop-color="#f7b928"/></linearGradient></defs><path d="M522.800 734.200q0-1.400 1.400-1.400h6.200l2.400 2.400h-10z" fill="#e8a417"/><path d="M522.800 735.200h22.800q1.400 0 1.400 1.400v16.600q0 1.400-1.400 1.400h-21.400q-1.400 0-1.400-1.400z" fill="url(#fld)"/><path d="M527 754.600v-5.800q0-2 2-2h11.400q2 0 2 2v5.800z" fill="#1d84d8"/><rect x="530.400" y="750.200" width="8.600" height="1.800" rx=".9" fill="#1569b4"/><g transform="translate(567.00 732.00) scale(1.3333)"><rect x="0" y="0" width="18" height="18" rx="1.2" fill="#1373e0"/><circle cx="9" cy="9" r="7.100" fill="#ffffff"/><path d="M3.300 9L7.200 6.500V8.100H10.800V6.500L14.700 9 10.800 11.500V9.900H7.200V11.500z" fill="#1373e0"/></g><defs><linearGradient id="ntp" x1="0" y1="0" x2="0" y2="1"><stop offset="0" stop-color="#4fc2e4"/><stop offset="1" stop-color="#2fa2cc"/></linearGradient></defs><rect x="614" y="752.800" width="18" height="3.200" rx="1" fill="#9a3c0a"/><rect x="614" y="751.400" width="18" height="2.400" fill="#e9e9e9"/><rect x="614" y="733.400" width="18" height="18.600" rx="1" fill="url(#ntp)"/><path d="M616.800 731.800v3M620.800 731.800v3M624.800 731.800v3M628.800 731.800v3" stroke="#1a6f8e" stroke-width="1.500"/><path d="M616.600 739h12.800M616.600 742.400h12.800M616.600 745.800h12.800M616.600 749.200h12.800" stroke="#1a7c9e" stroke-width="1.500"/><rect x="400.00" y="760" width="6" height="2.6" rx="1.3" fill="#8a8a8a"/><rect x="532.00" y="760" width="6" height="2.6" rx="1.3" fill="#8a8a8a"/><rect x="620.00" y="760" width="6" height="2.6" rx="1.3" fill="#8a8a8a"/><rect x="571" y="760" width="16" height="2.800" rx="1.400" fill="#1373e0"/><path d="M1098.800 747.400L1105.200 740.800 1111.600 747.400" fill="none" stroke="#1a1a1a" stroke-width="1.500"/><rect x="1123" y="735.600" width="12" height="16.400" rx="6" fill="#1488f0"/><path d="M1126.200 740.600l5.400 5.600-2.800 2.800v-10.400l2.800 2.800-5.400 5.400" fill="none" stroke="#fff" stroke-width="1.100"/><path d="M1153.200 736.200c2.600 1.600 4.600 2 6.800 2v5.400c0 4-3 6.800-6.800 8.400c-3.800-1.600-6.800-4.400-6.800-8.400v-5.400c2.200 0 4.200-.4 6.800-2z" fill="#2f9be8"/><path d="M1153.200 736.200c2.600 1.600 4.600 2 6.800 2v5.400c0 4-3 6.800-6.800 8.400z" fill="#1b78d0"/><circle cx="1157.400" cy="747.800" r="4.300" fill="#15a042" stroke="#f3f3f3" stroke-width=".7"/><path d="M1155.400 747.800l1.500 1.600 2.600-3" fill="none" stroke="#fff" stroke-width="1.100"/><g fill="none" stroke="#1a1a1a" stroke-width="1.300" stroke-linecap="round"><path d="M1217.600 741.600a11 11 0 0 1 15 0"/><path d="M1220 744.200a7.600 7.600 0 0 1 10.200 0"/><path d="M1222.600 746.600a4 4 0 0 1 5 0"/></g><circle cx="1225.100" cy="748.600" r="1.200" fill="#1a1a1a"/><path d="M1241.400 741.800h2.600l3.600-3.400v11.600l-3.600-3.400h-2.600z" fill="none" stroke="#1a1a1a" stroke-width="1.100" stroke-linejoin="round"/><g fill="none" stroke="#1a1a1a" stroke-width="1.100" stroke-linecap="round"><path d="M1250 741.400a4 4 0 0 1 0 5.600"/><path d="M1252.400 739.400a7 7 0 0 1 0 9.600"/><path d="M1254.800 737.600a9.600 9.600 0 0 1 0 13.200"/></g><rect x="1266.800" y="739.800" width="11.600" height="8.200" rx="1.400" fill="none" stroke="#1a1a1a" stroke-width="1.200"/><rect x="1268.600" y="741.600" width="8" height="4.600" rx=".6" fill="#1a1a1a"/><rect x="1279" y="742.200" width="1.600" height="3.400" rx=".6" fill="#1a1a1a"/><path d="M1267.600 736.600l-2.600 4.600h2.400l-1.200 3.800" fill="none" stroke="#1a1a1a" stroke-width="1.200"/></svg><div class="tt" id="lt_s" style="left:99.800px;top:737.700px;font-size:12px;line-height:15px;letter-spacing:-0.45px">Search</div><div class="tt" id="lt_w" style="left:224.600px;top:728.200px;width:22.400px;text-align:center;font-size:10.800px;line-height:14px;letter-spacing:-0.3px;color:#111">56°</div><div class="tt" id="lt_n1" style="left:834.300px;top:727.600px;font-size:14px;line-height:16px"><span style="font-family:DejaVu Sans,sans-serif;font-size:12.500px;letter-spacing:-1.700px;margin-left:-2.600px">↑</span>: 0.64 KB/s</div><div class="tt" id="lt_n2" style="left:834.300px;top:743.600px;font-size:14px;line-height:16px"><span style="font-family:DejaVu Sans,sans-serif;font-size:12.500px;letter-spacing:-1.700px;margin-left:-2.600px">↓</span>: 1.21 KB/s</div><div class="tt" id="lt_c1" style="left:933.300px;top:727.600px;font-size:14px;line-height:16px;letter-spacing:-0.5px">CPU: 8 %</div><div class="tt" id="lt_c2" style="left:933.300px;top:743.600px;font-size:14px;line-height:16px">MEM: 53 %</div><div class="tt" id="lt_t1" style="left:1008.500px;top:727.600px;width:80px;text-align:center;font-size:14px;line-height:16px"><span style="font-family:DejaVu Sans,sans-serif;font-size:12.500px;letter-spacing:-2.400px">↑↓</span>:</div><div class="tt" id="lt_t2" style="left:1011px;top:743.600px;width:80px;text-align:center;font-size:14px;line-height:16px">1.85 KB/s</div><div class="tt" id="lt_l1" style="left:1167px;top:729.500px;width:41px;text-align:center;font-size:11px;line-height:14px;letter-spacing:-0.35px">ENG</div><div class="tt" id="lt_l2" style="left:1167px;top:745.500px;width:41px;text-align:center;font-size:11px;line-height:14px;letter-spacing:-0.2px">INTL</div><div class="tt" id="lt_k1" style="right:19.700px;top:728.500px;text-align:right;font-size:11.800px;line-height:14px;letter-spacing:-0.15px">12:47 AM</div><div class="tt" id="lt_k2" style="right:19.700px;top:744.500px;text-align:right;font-size:11.800px;line-height:14px">1/4/2023</div>

</div>
</body>
</html>
